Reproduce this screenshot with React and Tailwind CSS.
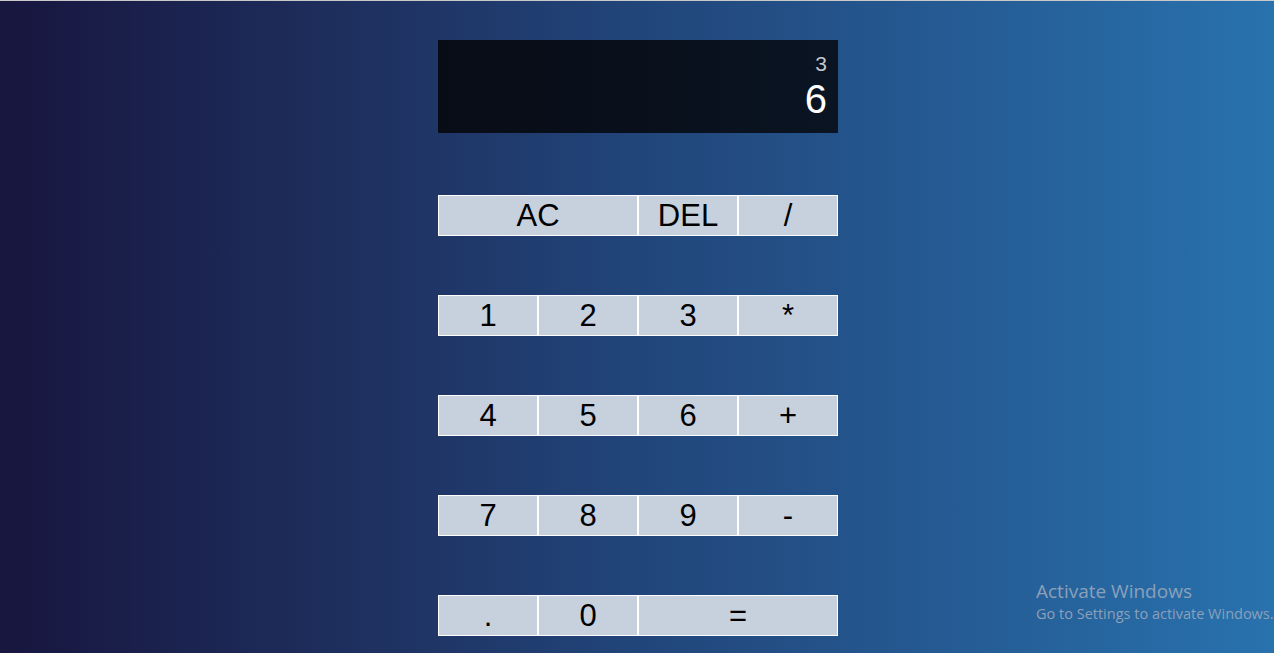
import { useState } from "react";

const keys = [
  { label: "AC", span: "col-span-2" },
  { label: "DEL" },
  { label: "/" },
  { label: "1" },
  { label: "2" },
  { label: "3" },
  { label: "*" },
  { label: "4" },
  { label: "5" },
  { label: "6" },
  { label: "+" },
  { label: "7" },
  { label: "8" },
  { label: "9" },
  { label: "-" },
  { label: "." },
  { label: "0" },
  { label: "=", span: "col-span-2" },
];

function App() {
  const [prev] = useState("3");
  const [current] = useState("6");

  return (
    <div className="relative h-[653px] overflow-hidden bg-gradient-to-r from-[#17163f] via-[#21457a] to-[#2872ae] font-['Liberation_Sans',Arial,sans-serif]">
      <div className="h-px bg-[#c9c9c9]" />
      <div className="flex flex-col items-center pl-[2px]">
        {/* display */}
        <div className="mt-[39px] flex h-[93px] w-[400px] flex-col items-end bg-gradient-to-r from-[#080c16] to-[#0a1422] px-[11px] pt-[12px]">
          <div className="text-[21px] leading-[23px] text-[#c3c8ce]">{prev}</div>
          <div className="text-[40px] leading-[48px] text-white">{current}</div>
        </div>

        {/* keys */}
        <div className="mt-[62px] grid w-[400px] grid-cols-4 gap-y-[59px]">
          {keys.map((k) => (
            <button
              key={k.label}
              className={`h-[41px] border border-white bg-[#c7d1de] text-[31px] leading-none text-black ${k.span || ""}`}
            >
              {k.label}
            </button>
          ))}
        </div>
      </div>

      {/* windows watermark */}
      <div className="absolute left-[1036px] top-[580px] font-['Open_Sans','Noto_Sans',sans-serif] text-[#8ca0ba]">
        <div className="text-[19px] leading-[22px]">Activate Windows</div>
        <div className="text-[14.5px] leading-[24px]">Go to Settings to activate Windows.</div>
      </div>
    </div>
  );
}

export default App;
